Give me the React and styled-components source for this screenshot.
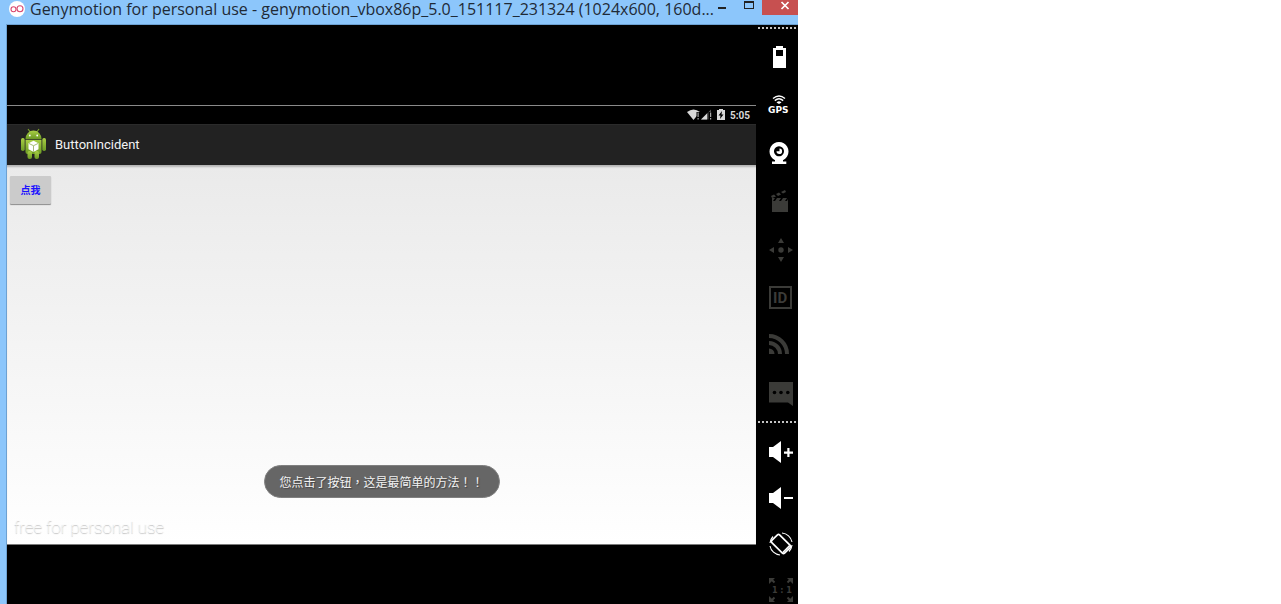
import React from 'react';
import styled, { createGlobalStyle } from 'styled-components';

const GlobalStyle = createGlobalStyle`
  * {
    box-sizing: border-box;
  }

  body {
    margin: 0;
    background-color: #fff;
    font-family: Roboto, 'Noto Sans CJK SC', sans-serif;
  }
`;

const Window = styled.div`
  display: flex;
  flex-direction: column;
  width: 100%;
  max-width: 798px;
  min-height: 100vh;
  background-color: #8cc6fb;
`;

const TitleBar = styled.header`
  display: flex;
  align-items: flex-start;
  height: 24px;
  padding-left: 9px;
`;

const Title = styled.h1`
  flex: 1;
  min-width: 0;
  margin: 0 0 0 5px;
  color: #1f2a36;
  font: 400 16px/19px 'Open Sans', 'Noto Sans', sans-serif;
  white-space: nowrap;
`;

const WindowButtons = styled.div`
  display: flex;
`;

const WindowButton = styled.button`
  display: flex;
  justify-content: center;
  width: ${({ $width }) => $width}px;
  height: 15px;
  padding: ${({ $close }) => ($close ? '0 0 0 10px' : '0')};
  border: 0;
  background-color: ${({ $close }) => ($close ? '#c75050' : 'transparent')};
`;

const WindowBody = styled.div`
  display: flex;
  flex: 1;
  margin-left: 6px;
  border-top: 1px solid #6da1d2;
  border-left: 1px solid #6da1d2;
  background-color: #000;
`;

const Device = styled.main`
  flex: 1;
  min-width: 0;
  padding-top: 80px;
`;

const Screen = styled.div`
  position: relative;
  border-top: 1px solid #8a8a8a;
  border-bottom: 1px solid #7a7a7a;
`;

const StatusBar = styled.div`
  display: flex;
  justify-content: flex-end;
  align-items: center;
  height: 18px;
  padding-right: 6px;
  color: #d8d8d8;
  font-size: 10px;
  font-weight: 700;
`;

const ActionBar = styled.div`
  display: flex;
  align-items: center;
  gap: 7px;
  height: 41px;
  padding-left: 13px;
  border-top: 1px solid #2b2b2b;
  background-color: #222;
`;

const AppName = styled.h2`
  margin: 0;
  color: #f3f3f3;
  font-size: 13px;
  font-weight: 400;
  line-height: 16px;
`;

const Content = styled.div`
  min-height: 379px;
  padding: 11px 3px;
  background: linear-gradient(#eaeaea, #fff);
  box-shadow: inset 0 3px 2px -1px #b4b4b4;
`;

const AppButton = styled.button`
  display: block;
  width: 41px;
  height: 28px;
  padding: 0;
  border: 0;
  border-radius: 1px;
  background-color: #cbcbcb;
  box-shadow: 0 1px 1px #8c8c8c;
  color: #1c12ff;
  font: 700 10px/26px 'Noto Sans CJK SC', sans-serif;
`;

const Toast = styled.div`
  position: absolute;
  bottom: 46px;
  left: 50%;
  transform: translateX(-50%);
  padding: 1px 15px 0;
  border: 1px solid #808080;
  border-radius: 17px;
  background-color: #666;
  color: #f2f2f2;
  font-family: 'Noto Sans CJK TC', sans-serif;
  font-size: 12px;
  line-height: 30px;
  text-shadow: 1px 1px 1px #444;
  white-space: nowrap;
`;

const Watermark = styled.div`
  position: absolute;
  bottom: 5px;
  left: 7px;
  color: #fff;
  font-size: 17px;
  font-weight: 100;
  line-height: 24px;
  text-shadow: 0 1px 1px #999;
`;

const SideBar = styled.nav`
  width: 42px;
  padding: 2px 2px 0;
`;

const Divider = styled.hr`
  height: 2px;
  margin: 0;
  border: 0;
  background: repeating-linear-gradient(90deg, #c4c4c4 0 2px, #000 2px 4px);
`;

const ToolGroup = styled.div`
  display: flex;
  flex-direction: column;
  gap: ${({ $tight }) => ($tight ? '18px' : '20px')};
  padding: ${({ $tight }) => ($tight ? '15px 0 0 8px' : '14px 0 14px 8px')};
`;

const Tool = styled.button`
  display: block;
  width: 28px;
  height: 28px;
  padding: 0;
  border: 0;
  background-color: transparent;
  color: ${({ $off }) => ($off ? '#3b3b38' : '#fff')};

  svg {
    display: block;
  }
`;

const ToolText = styled.text`
  fill: currentColor;
  font-family: ${({ $wide }) => ($wide ? "'DejaVu Sans'" : 'Roboto')},
    sans-serif;
  font-size: ${({ $size }) => $size}px;
  font-weight: 700;
`;

const SPEAKER = 'M3 9h4l8-6v22l-8-6H3z';

const tools = [
  {
    label: 'Battery',
    icon: <path d="M7 5h3V3h7v2h3v20H7zM10 7v6h7V7z" fillRule="evenodd" />,
  },
  {
    label: 'GPS',
    icon: (
      <>
        <path
          d="M7 7.5Q13 2.5 19 7.5M8.8 9.6Q13 6 17.2 9.6"
          fill="none"
          stroke="currentColor"
          strokeWidth="1.4"
        />
        <path d="M10.5 11.5Q13 9 15.5 11.5L13 13z" />
        <ToolText $wide $size={9} x="2" y="22">
          GPS
        </ToolText>
      </>
    ),
  },
  {
    label: 'Camera',
    icon: (
      <>
        <path
          d="M13 3a9.5 9.5 0 1 0 .01 0zM13 7.3a5 5 0 1 1-.01 0z"
          fillRule="evenodd"
        />
        <path d="M13.5 9.5v2.8h-3a2.8 2.8 0 1 0 3-2.8z" />
        <path d="M9 20h8v2.5h3.3V25H6v-2.5h3z" />
      </>
    ),
  },
  {
    label: 'Screencast',
    off: true,
    icon: (
      <>
        <path d="M6 14h16v11H6z" />
        <path d="M6 11h3l-2 3H6zM11 11h4l-2 3h-4zM17 11h4l-2 3h-4zM22 12v2h-1z" />
        <path d="M5 9l3-1.5 2 2L6 11zM10 7l3-1.5 2 2-3 1.5zM15 5l4-2 1 2-3 1.5z" />
      </>
    ),
  },
  {
    label: 'Remote control',
    off: true,
    icon: (
      <>
        <circle cx="15" cy="15" r="2.7" />
        <path d="M15 3l3 5h-6zM15 27l3-5h-6zM3 15l5-3v6zM27 15l-5-3v6z" />
      </>
    ),
  },
  {
    label: 'Identifiers',
    off: true,
    icon: (
      <>
        <path d="M3 3h23v23H3zM5 5v19h19V5z" fillRule="evenodd" />
        <ToolText $size={15} x="7" y="20">
          ID
        </ToolText>
      </>
    ),
  },
  {
    label: 'Network',
    off: true,
    icon: (
      <>
        <path
          d="M3 5a18 18 0 0 1 18 18M3 12a11 11 0 0 1 11 11"
          fill="none"
          stroke="currentColor"
          strokeWidth="4"
        />
        <path d="M3 17.5A5.5 5.5 0 0 1 8.5 23H3z" />
      </>
    ),
  },
  {
    label: 'Phone',
    off: true,
    icon: (
      <>
        <path d="M3 3h24v24l-5-3.5H3z" />
        <g fill="#000">
          <circle cx="8.5" cy="13.5" r="1.8" />
          <circle cx="15" cy="13.5" r="1.8" />
          <circle cx="21.8" cy="13.5" r="1.8" />
        </g>
      </>
    ),
  },
];

const deviceTools = [
  {
    label: 'Volume up',
    icon: (
      <path
        d={`${SPEAKER}M18 13.5h3.3V10h2.2v3.5H27v2.2h-3.5V19h-2.2v-3.3H18z`}
      />
    ),
  },
  {
    label: 'Volume down',
    icon: <path d={`${SPEAKER}M18 13h9v2h-9z`} />,
  },
  {
    label: 'Rotate',
    icon: (
      <g fill="none" stroke="currentColor">
        <g transform="rotate(-45 15 14)">
          <rect x="9.5" y="5" width="11" height="18" rx="1.5" strokeWidth="1.7" />
          <path d="M10 21.3h10" strokeWidth="1.6" />
        </g>
        <path
          d="M16 3a11 11 0 0 1 10 9M14 25a11 11 0 0 1-10-9M4 13a11 11 0 0 1 3-6.5M26 15a11 11 0 0 1-3 6.5"
          strokeWidth="1.1"
        />
      </g>
    ),
  },
  {
    label: 'Pixel perfect',
    off: true,
    icon: (
      <>
        <path d="M3 2h6L7.2 3.8l2 2-1.4 1.4-2-2L3 8zM27 2h-6l1.8 1.8-2 2 1.4 1.4 2-2L27 8zM3 26h6l-1.8-1.8 2-2-1.4-1.4-2 2L3 20zM27 26h-6l1.8-1.8-2-2 1.4-1.4 2 2L27 20z" />
        <ToolText $wide $size={8} x="6" y="17">
          1 : 1
        </ToolText>
      </>
    ),
  },
];

function Tools({ items, tight }) {
  return (
    <ToolGroup $tight={tight}>
      {items.map(({ label, off, icon }) => (
        <Tool key={label} type="button" aria-label={label} $off={off}>
          <svg width="28" height="28" fill="currentColor">
            {icon}
          </svg>
        </Tool>
      ))}
    </ToolGroup>
  );
}

function GenymotionLogo() {
  return (
    <svg width="16" height="18" fill="none">
      <circle cx="8" cy="9" r="8" fill="#fff" />
      <g stroke="#d9486f" strokeWidth="1.1">
        <circle cx="4.5" cy="9.3" r="2.5" />
        <circle cx="11" cy="8.8" r="3" />
      </g>
    </svg>
  );
}

function AndroidIcon() {
  return (
    <svg width="28" height="34">
      <defs>
        <linearGradient id="robot" x1="0" y1="0" x2="0" y2="1">
          <stop offset="0" stopColor="#a9cf45" />
          <stop offset="1" stopColor="#6c9a24" />
        </linearGradient>
      </defs>
      <path d="M8 1l2.5 3.5M19 1l-2.5 3.5" stroke="#7a9c2c" strokeWidth="1.2" />
      <g fill="url(#robot)">
        <path d="M5.500 11a8 8.500 0 0 1 16 0z" />
        <path d="M5.500 11.700h16V24a2 2 0 0 1-2 2h-12a2 2 0 0 1-2-2z" />
        <rect x="1" y="10" width="3.7" height="13" rx="1.7" />
        <rect x="22.300" y="10" width="3.7" height="13" rx="1.7" />
        <rect x="7.500" y="23" width="4.500" height="8" rx="2" />
        <rect x="14.500" y="23" width="4.500" height="8" rx="2" />
      </g>
      <circle cx="9.800" cy="7.500" r="0.9" fill="#fff" />
      <circle cx="17.200" cy="7.500" r="0.9" fill="#fff" />
      <path d="M13.500 12.700l5 2.500v6l-5 2.800-5-2.800v-6z" fill="#fff" />
      <path
        d="M9 15.500l4.500 2.200 4.500-2.200M13.500 17.700v6"
        fill="none"
        stroke="#9bb368"
        strokeWidth="0.9"
      />
    </svg>
  );
}

function StatusIcons() {
  return (
    <svg width="43" height="14" fill="#d8d8d8">
      <path d="M0 4Q6.5-1 13 4L6.5 12z" />
      <path d="M14 11.5h10v-10z" fill="#555" />
      <path d="M14 11.5h6v-6z" />
      <path d="M9.5 4H13v9H9.5zM21.5 4h3v9h-3z" fill="#000" />
      <path
        d="M10.5 4.5h1.2V9h-1.2zM10.5 10h1.2v1.5h-1.2zM23 4.5h1.2V9H23zM23 10h1.2v1.5H23z"
        fill="#a5a5a5"
      />
      <path d="M30 2h2V1h4v1h2v10h-8z" />
      <path d="M35 3l-3.5 4.500h2l-.5 3.500 3.500-4.500h-2z" fill="#000" />
    </svg>
  );
}

export default function App() {
  return (
    <>
      <GlobalStyle />
      <Window>
        <TitleBar>
          <GenymotionLogo />
          <Title>
            Genymotion for personal use - genymotion_vbox86p_5.0_151117_231324
            (1024x600, 160d...
          </Title>
          <WindowButtons>
            <WindowButton $width={27} type="button" aria-label="Minimize">
              <svg width="10" height="12">
                <path d="M1 7h8v2H1z" fill="#222" />
              </svg>
            </WindowButton>
            <WindowButton $width={27} type="button" aria-label="Maximize">
              <svg width="10" height="12">
                <path d="M0 1h10v8H0zM1 3v5h8V3z" fill="#222" fillRule="evenodd" />
              </svg>
            </WindowButton>
            <WindowButton $close $width={36} type="button" aria-label="Close">
              <svg width="10" height="12">
                <path d="M1.5 2l7 7M8.5 2l-7 7" stroke="#fff" strokeWidth="1.7" />
              </svg>
            </WindowButton>
          </WindowButtons>
        </TitleBar>

        <WindowBody>
          <Device>
            <Screen>
              <StatusBar>
                <StatusIcons />
                <span>5:05</span>
              </StatusBar>
              <ActionBar>
                <AndroidIcon />
                <AppName>ButtonIncident</AppName>
              </ActionBar>
              <Content>
                <AppButton type="button">点我</AppButton>
              </Content>
              <Toast role="status">您点击了按钮，这是最简单的方法！！</Toast>
              <Watermark>free for personal use</Watermark>
            </Screen>
          </Device>

          <SideBar>
            <Divider />
            <Tools items={tools} />
            <Divider />
            <Tools items={deviceTools} tight />
          </SideBar>
        </WindowBody>
      </Window>
    </>
  );
}
